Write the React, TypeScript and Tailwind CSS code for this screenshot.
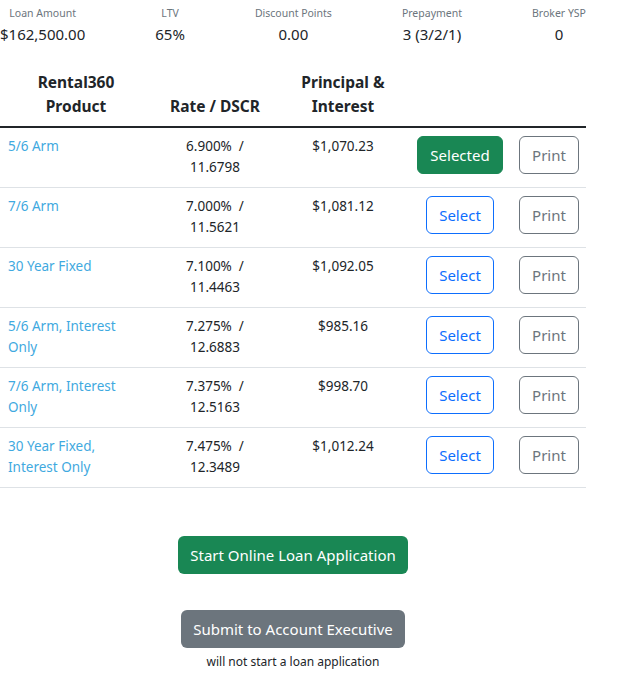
import React from "react"

const summary = [
    { label: "Loan Amount", value: "$162,500.00" },
    { label: "LTV", value: "65%" },
    { label: "Discount Points", value: "0.00" },
    { label: "Prepayment", value: "3 (3/2/1)" },
    { label: "Broker YSP", value: "0" },
]

const products = [
    { name: ["5/6 Arm"], rate: "6.900%", dscr: "11.6798", pi: "$1,070.23", selected: true },
    { name: ["7/6 Arm"], rate: "7.000%", dscr: "11.5621", pi: "$1,081.12" },
    { name: ["30 Year Fixed"], rate: "7.100%", dscr: "11.4463", pi: "$1,092.05" },
    { name: ["5/6 Arm, Interest", "Only"], rate: "7.275%", dscr: "12.6883", pi: "$985.16" },
    { name: ["7/6 Arm, Interest", "Only"], rate: "7.375%", dscr: "12.5163", pi: "$998.70" },
    { name: ["30 Year Fixed,", "Interest Only"], rate: "7.475%", dscr: "12.3489", pi: "$1,012.24" },
]

export default function App() {
    return (
        <div className="min-h-screen bg-white text-[#212529] font-['Noto_Sans',sans-serif]">
            <div className="w-[586px]">
                {/* loan summary */}
                <div className="flex justify-between">
                    {summary.map((s) => (
                        <div key={s.label} className="flex flex-col items-center">
                            <span className="pt-[4px] text-[10.5px] leading-[18px] text-[#6c757d]">{s.label}</span>
                            <span className="text-[15px] leading-[24px]">{s.value}</span>
                        </div>
                    ))}
                </div>

                {/* products */}
                <table className="mt-[16px] w-full border-collapse table-fixed">
                    <colgroup>
                        <col className="w-[152px]" />
                        <col className="w-[126px]" />
                        <col className="w-[130px]" />
                        <col className="w-[104px]" />
                        <col className="w-[74px]" />
                    </colgroup>
                    <thead>
                        <tr className="border-b-2 border-[#212529] text-[15.5px] leading-[24px] font-bold">
                            <th className="px-2 py-2 align-bottom text-center">Rental360<br />Product</th>
                            <th className="px-2 py-2 align-bottom text-center">Rate / DSCR</th>
                            <th className="px-2 py-2 align-bottom text-center">Principal &amp;<br />Interest</th>
                            <th></th>
                            <th></th>
                        </tr>
                    </thead>
                    <tbody>
                        {products.map((p) => (
                            <tr key={p.rate} className="border-b border-[#dee2e6] text-[13.5px] leading-[21px]">
                                <td className="px-2 pt-2 pb-[9px] align-top">
                                    <a href="#" className="text-[#3fa9e0]">
                                        {p.name.map((n, i) => (
                                            <div key={i}>{n}</div>
                                        ))}
                                    </a>
                                </td>
                                <td className="px-2 pt-2 pb-[9px] align-top text-center">
                                    <div>{p.rate}&nbsp; /</div>
                                    <div>{p.dscr}</div>
                                </td>
                                <td className="px-2 pt-2 pb-[9px] align-top text-center">{p.pi}</td>
                                <td className="px-1 pt-2 pb-[9px] align-top text-center">
                                    {p.selected ? (
                                        <button className="rounded-[6px] border border-[#198754] bg-[#198754] px-3 py-1.5 text-[15px] leading-[24px] text-white">
                                            Selected
                                        </button>
                                    ) : (
                                        <button className="rounded-[6px] border border-[#0d6efd] bg-white px-3 py-1.5 text-[15px] leading-[24px] text-[#0d6efd]">
                                            Select
                                        </button>
                                    )}
                                </td>
                                <td className="px-1 pt-2 pb-[9px] align-top text-center">
                                    <button className="rounded-[6px] border border-[#6c757d] bg-white px-3 py-1.5 text-[15px] leading-[24px] text-[#6c757d]">
                                        Print
                                    </button>
                                </td>
                            </tr>
                        ))}
                    </tbody>
                </table>

                {/* actions */}
                <div className="mt-[48px] flex flex-col items-center">
                    <button className="rounded-[6px] bg-[#198754] px-3 py-[7px] text-[15px] leading-[24px] text-white">
                        Start Online Loan Application
                    </button>
                    <button className="mt-[36px] rounded-[6px] bg-[#6c757d] px-3 py-[7px] text-[15px] leading-[24px] text-white">
                        Submit to Account Executive
                    </button>
                    <span className="mt-[4px] text-[12px] leading-[20px]">will not start a loan application</span>
                </div>
            </div>
        </div>
    )
}
